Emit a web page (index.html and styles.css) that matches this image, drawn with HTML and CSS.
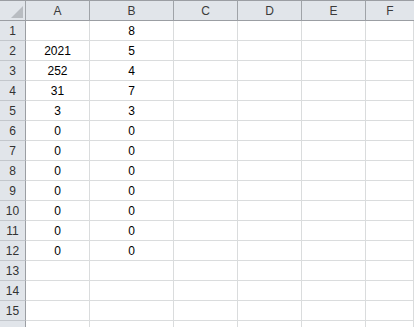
FILE: index.html
```html
<!DOCTYPE html>
<html lang="en">
<head>
  <meta charset="UTF-8">
  <title>Sheet1</title>
  <link rel="stylesheet" href="styles.css">
</head>
<body>
<div class="sheet">
  <!-- column headers -->
  <div class="corner"><span class="corner-mark"></span></div>
  <div class="col-head">A</div>
  <div class="col-head">B</div>
  <div class="col-head">C</div>
  <div class="col-head">D</div>
  <div class="col-head">E</div>
  <div class="col-head last">F</div>
</div>
<script>
  // fill the grid rows
  var data = [
    ['', '8'], ['2021', '5'], ['252', '4'], ['31', '7'], ['3', '3'],
    ['0', '0'], ['0', '0'], ['0', '0'], ['0', '0'], ['0', '0'], ['0', '0'], ['0', '0']
  ];
  var sheet = document.querySelector('.sheet');
  for (var r = 1; r <= 16; r++) {
    var head = document.createElement('div');
    head.className = 'row-head';
    // the last row is only partly visible, its number falls below the edge
    if (r < 16) head.textContent = r;
    sheet.appendChild(head);
    for (var c = 0; c < 6; c++) {
      var cell = document.createElement('div');
      cell.className = 'cell';
      var row = data[r - 1];
      if (row && row[c]) cell.textContent = row[c];
      sheet.appendChild(cell);
    }
  }
</script>
</body>
</html>
```

FILE: styles.css
```css
body {
  margin: 0;
  background: #fff;
  overflow: hidden;
  font-family: "Liberation Sans", Arial, sans-serif;
  font-size: 12px;
}

.sheet {
  display: grid;
  grid-template-columns: 26px 64px 84px 64px 64px 64px 1fr;
  grid-auto-rows: 20px;
  grid-template-rows: 21px;
}

.corner,
.col-head {
  background: #e1e5ea;
  border-top: 1px solid #9b9ea3;
  border-bottom: 1px solid #9b9ea3;
  border-right: 1px solid #9fa3a8;
  box-sizing: border-box;
}

.corner {
  position: relative;
}

.corner-mark {
  position: absolute;
  right: 2px;
  bottom: 2px;
  width: 0;
  height: 0;
  border-left: 12px solid transparent;
  border-bottom: 12px solid #b8bcc1;
}

.col-head {
  display: flex;
  align-items: center;
  justify-content: center;
  color: #3b3b3b;
}

.col-head.last {
  border-right: none;
}

.row-head {
  background: #e1e5ea;
  border-right: 1px solid #9b9ea3;
  border-bottom: 1px solid #c3c7cc;
  box-sizing: border-box;
  display: flex;
  align-items: center;
  justify-content: center;
  color: #333;
}

.cell {
  border-right: 1px solid #dadcdd;
  border-bottom: 1px solid #dadcdd;
  box-sizing: border-box;
  display: flex;
  align-items: center;
  justify-content: center;
  color: #000;
}
```
